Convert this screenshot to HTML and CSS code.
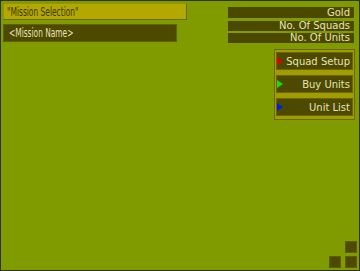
FILE: index.html
```html
<!DOCTYPE html>
<html>
<head>
<meta charset="utf-8">
<link rel="stylesheet" href="styles.css">
</head>
<body>
<div class="frame">
  <div class="top">
    <div class="left">
      <div class="title"><span class="narrow">"Mission Selection"</span></div>
      <div class="mission"><span class="narrow">&lt;Mission Name&gt;</span></div>
    </div>
    <div class="right">
      <div class="stat gold">Gold</div>
      <div class="stat">No. Of Squads</div>
      <div class="stat">No. Of Units</div>
      <div class="panel">
        <div class="btn"><span class="tri red"></span><span class="label">Squad Setup</span></div>
        <div class="btn"><span class="tri green"></span><span class="label">Buy Units</span></div>
        <div class="btn"><span class="tri blue"></span><span class="label">Unit List</span></div>
      </div>
    </div>
  </div>
  <div class="spacer"></div>
  <div class="squares">
    <div class="sq empty"></div><div class="sq"></div>
    <div class="sq"></div><div class="sq"></div>
  </div>
</div>
</body>
</html>
```
FILE: styles.css
```css
html, body {
  margin: 0;
  padding: 0;
  background: #3a3a3a;
}
.frame {
  box-sizing: border-box;
  width: 360px;
  height: 271px;
  border: 1px solid #2e3300;
  background: #7f9b00;
  display: flex;
  flex-direction: column;
  font-family: "DejaVu Sans", sans-serif;
}
.top {
  display: flex;
  justify-content: space-between;
}
.left {
  padding: 2px 0 0 2px;
  display: flex;
  flex-direction: column;
  gap: 4px;
}
.narrow {
  display: inline-block;
  white-space: nowrap;
  transform-origin: left center;
  font-family: "DejaVu Sans Condensed", "DejaVu Sans", sans-serif;
  font-stretch: condensed;
}
.title {
  box-sizing: border-box;
  width: 184px;
  height: 17px;
  background: #b3a800;
  border: 1px solid #6c6800;
  border-top-color: #9a9200;
  border-left-color: #9a9200;
  color: #3a3600;
  font-size: 13px;
  line-height: 15px;
  padding-left: 3px;
  overflow: hidden;
}
.title .narrow {
  transform: scaleX(0.64);
}
.mission {
  box-sizing: border-box;
  width: 174px;
  height: 18px;
  background: #4d4a00;
  border: 1px solid #5f6200;
  color: #e6e2b8;
  font-size: 12px;
  line-height: 16px;
  padding-left: 5px;
  overflow: hidden;
}
.mission .narrow {
  transform: scaleX(0.69);
}
.right {
  width: 127px;
  margin-right: 4px;
  padding-top: 6px;
  display: flex;
  flex-direction: column;
  align-items: flex-end;
}
.stat {
  box-sizing: border-box;
  width: 126px;
  height: 10px;
  margin-right: 1px;
  background: #4b4900;
  color: #e6e2b8;
  font-size: 10px;
  line-height: 10px;
  text-align: right;
  padding-right: 4px;
  margin-top: 2px;
  white-space: nowrap;
}
.stat.gold {
  height: 11px;
  line-height: 11px;
  margin-top: 0;
  margin-bottom: 1px;
}
.panel {
  box-sizing: border-box;
  width: 81px;
  margin-top: 6px;
  background: #a39c00;
  border: 1px solid #6b6900;
  padding: 2px 1px 3px 1px;
  display: flex;
  flex-direction: column;
  gap: 5px;
}
.btn {
  box-sizing: border-box;
  height: 18px;
  background: #4d4a00;
  border: 1px solid #6a6700;
  display: flex;
  align-items: center;
  justify-content: space-between;
  padding: 0 2px 0 0;
  color: #e6e2b8;
  font-size: 10px;
  white-space: nowrap;
}
.tri {
  width: 0;
  height: 0;
  border-top: 4.5px solid transparent;
  border-bottom: 4.5px solid transparent;
  border-left: 6px solid #e00000;
}
.tri.green { border-left-color: #1ee000; }
.tri.blue { border-left-color: #0020e0; }
.spacer { flex: 1; }
.squares {
  align-self: flex-end;
  display: grid;
  grid-template-columns: 12px 12px;
  grid-auto-rows: 12px;
  gap: 3px 4px;
  margin: 0 2px 2px 0;
}
.sq {
  box-sizing: border-box;
  background: #4d4a00;
  border: 1px solid #5c5f00;
}
.sq.empty {
  background: transparent;
  border: none;
}
```
